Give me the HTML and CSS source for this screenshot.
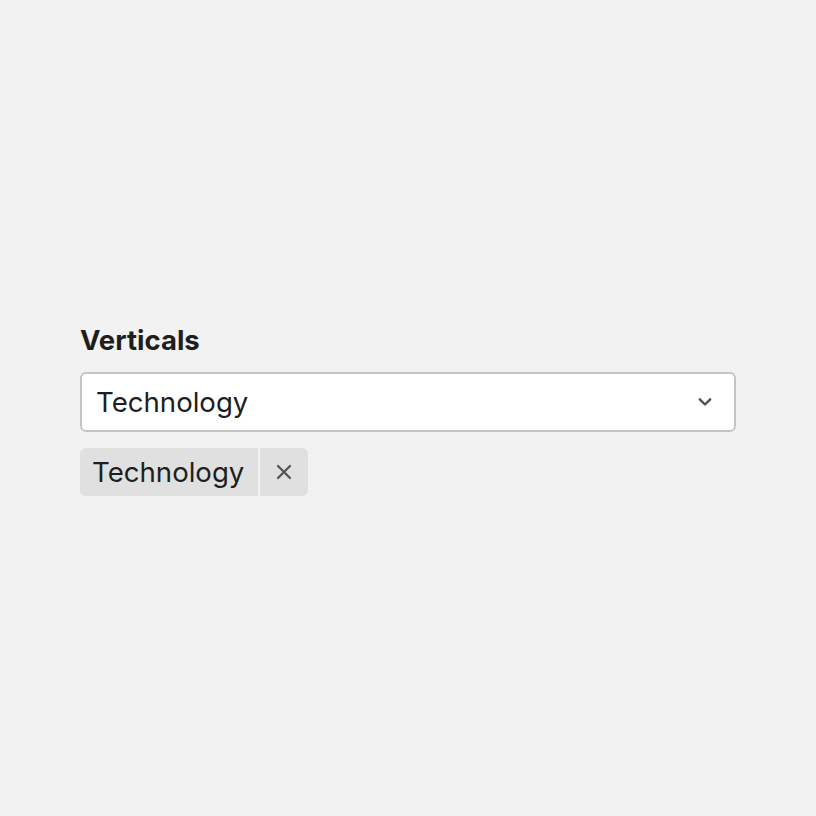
FILE: index.html
```html
<!DOCTYPE html>
<html lang="en">
<head>
<meta charset="utf-8">
<link rel="stylesheet" href="styles.css">
</head>
<body>
<div class="field">
  <label class="label">Verticals</label>
  <div class="select">
    <span class="select-value">Technology</span>
    <svg class="chevron" width="16" height="16" viewBox="0 0 16 16"><path d="M2.8 5.3L8 10.5l5.2-5.2" fill="none" stroke="#505050" stroke-width="2.4" stroke-linecap="round" stroke-linejoin="round"/></svg>
  </div>
  <div class="chips">
    <div class="chip">
      <span class="chip-text">Technology</span>
      <span class="chip-remove"><svg width="16" height="16" viewBox="0 0 16 16"><path d="M2 2l12 12M14 2L2 14" stroke="#555" stroke-width="2.3" stroke-linecap="round"/></svg></span>
    </div>
  </div>
</div>
</body>
</html>
```

FILE: styles.css
```css
html, body {
  margin: 0;
  padding: 0;
  background: #f2f2f2;
}
body {
  font-family: Inter, "Noto Sans", sans-serif;
  color: #1e1e1e;
}
.field {
  display: flex;
  flex-direction: column;
  padding: 322px 80px 0 80px;
}
.label {
  font-size: 27.5px;
  font-weight: 700;
  line-height: 36px;
  margin-bottom: 14px;
}
.select {
  box-sizing: border-box;
  height: 60px;
  border: 2px solid #c4c4c4;
  border-radius: 6px;
  background: #fff;
  display: flex;
  align-items: center;
  justify-content: space-between;
  padding: 0 21px 0 14px;
}
.select-value {
  font-size: 27.6px;
  line-height: 34px;
}
.chevron {
  display: block;
}
.chips {
  display: flex;
  margin-top: 16px;
}
.chip {
  display: flex;
  height: 48px;
  border-radius: 6px;
  background: #e0e0e0;
  overflow: hidden;
}
.chip-text {
  font-size: 27.6px;
  line-height: 48px;
  padding: 0 14px 0 12px;
}
.chip-remove {
  width: 48px;
  border-left: 2px solid #f2f2f2;
  display: flex;
  align-items: center;
  justify-content: center;
}
.chip-remove svg {
  display: block;
}
```
